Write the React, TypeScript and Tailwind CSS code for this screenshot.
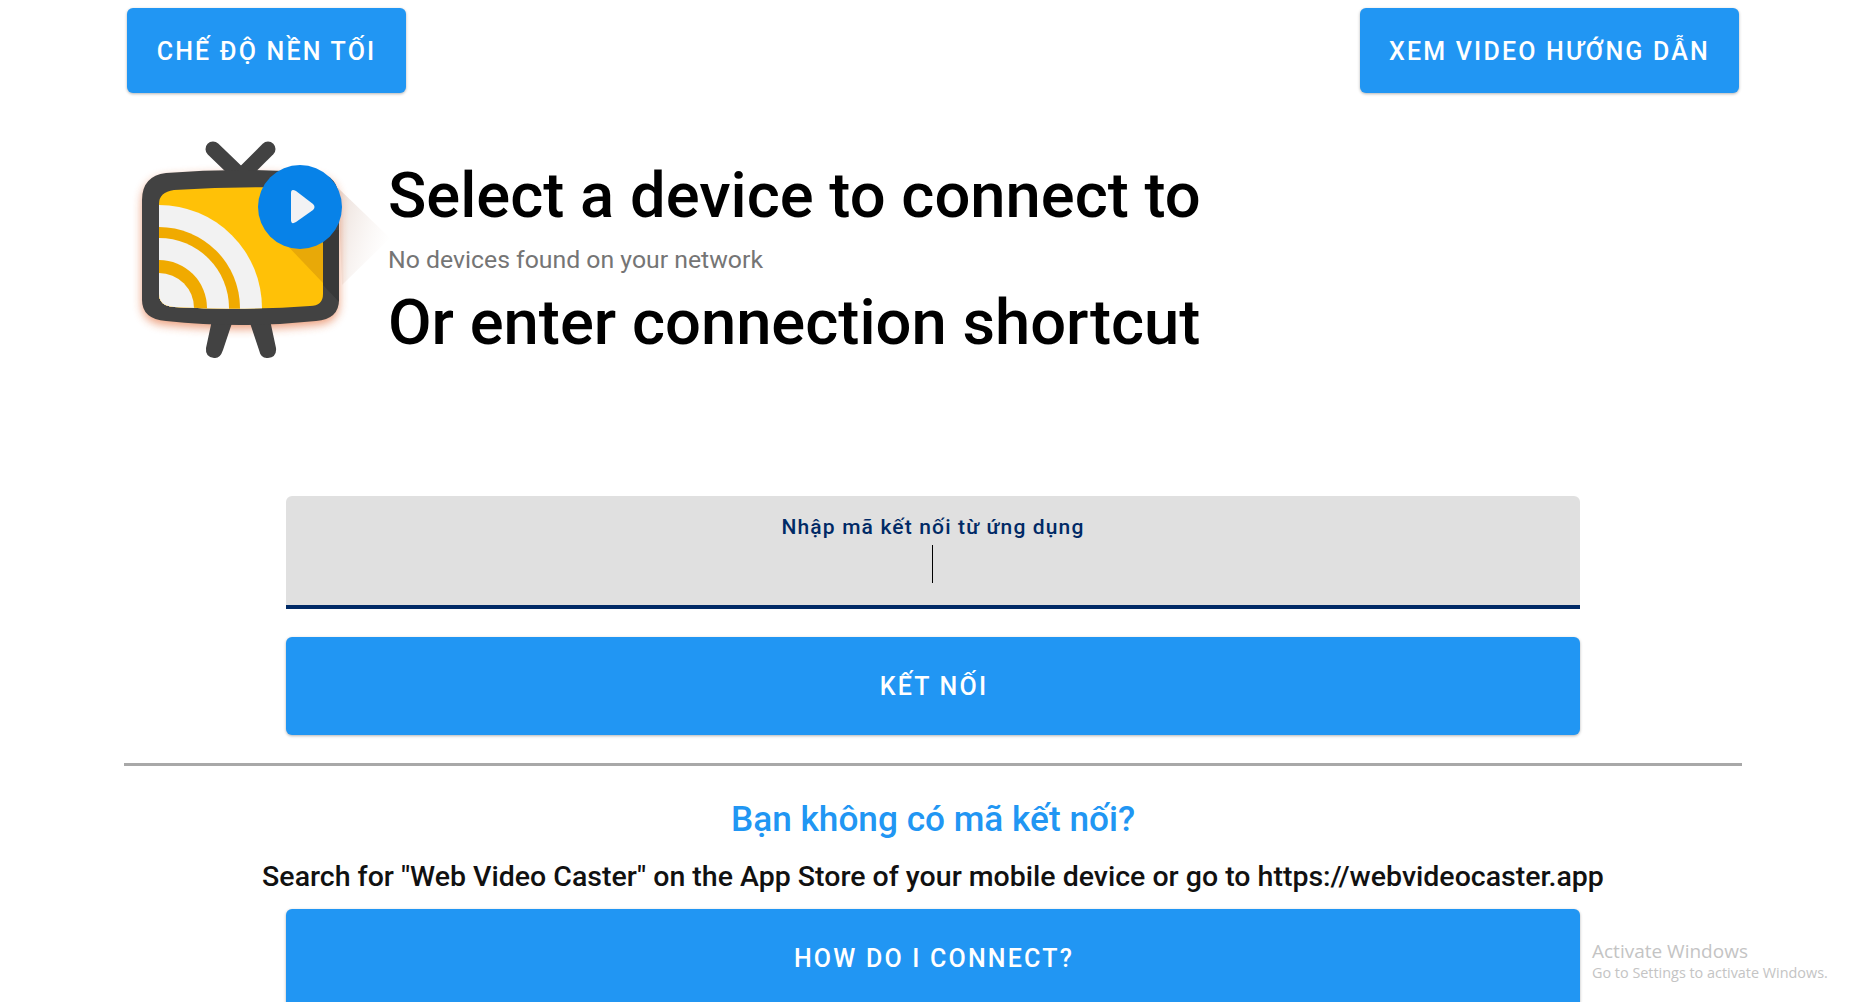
function TvLogo() {
  const body = "M32 80 Q32 56 56 53 Q130 47 206 53 Q229 55 229 80 L229 180 Q229 199 206 201 Q130 209 56 201 Q32 199 32 180Z"
  return (
    <svg width="300" height="260" viewBox="0 0 300 260" className="shrink-0">
      <defs>
        <clipPath id="screen">
          <path d="M64 70 Q130 66 200 68 Q213 69 213 82 L213 174 Q213 186 200 186 Q130 191 64 187 Q49 186 49 174 L49 84 Q49 72 64 70Z" />
        </clipPath>
        <clipPath id="bodyclip">
          <path d={body} />
        </clipPath>
        <linearGradient id="fade" x1="0" y1="0" x2="1" y2="0.55">
          <stop offset="0" stopColor="#c9a898" stopOpacity="0.4" />
          <stop offset="1" stopColor="#e8d8d0" stopOpacity="0" />
        </linearGradient>
        <filter id="glow" x="-20%" y="-20%" width="140%" height="140%">
          <feGaussianBlur stdDeviation="5" />
        </filter>
      </defs>
      <path d="M228 68 L280 118 L232 165Z" fill="url(#fade)" />
      <path d={body} transform="translate(0 4)" fill="#e0622a" opacity="0.6" filter="url(#glow)" />
      <g stroke="#424242" strokeWidth="15" strokeLinecap="round" fill="none">
        <path d="M103 29 L131 56" />
        <path d="M158 29 L131 56" />
      </g>
      <path d="M102 200 L123 200 L113 230 Q110 239 104 238 Q95 237 96 228Z" fill="#424242" />
      <path d="M139 200 L160 200 L166 228 Q167 237 158 238 Q151 239 149 230Z" fill="#424242" />
      <path d={body} fill="#424242" />
      <g clipPath="url(#bodyclip)">
        <path d="M213 110 L232 110 L232 185 L213 165Z" fill="#383838" />
      </g>
      <g clipPath="url(#screen)">
        <rect x="49" y="60" width="170" height="135" fill="#ffc107" />
        <path d="M172 120 L213 163 L213 100Z" fill="#e8a908" />
        <circle cx="49" cy="188" r="103" fill="#f2f2f2" />
        <circle cx="49" cy="188" r="81" fill="#f0aa00" />
        <circle cx="49" cy="188" r="70" fill="#f2f2f2" />
        <circle cx="49" cy="188" r="48" fill="#f0aa00" />
        <circle cx="49" cy="188" r="35" fill="#f2f2f2" />
      </g>
      <circle cx="190" cy="87" r="42" fill="#0782e8" />
      <path d="M181 73 Q181 68 186 71 L203 84 Q206 87 203 90 L186 102 Q181 105 181 100Z" fill="#f2f2f4" />
    </svg>
  )
}

export default function App() {
  return (
    <div className="w-full h-[1002px] overflow-hidden relative bg-white font-['Roboto',sans-serif]">
      <div className="pl-[124px] pr-[123px]">
        <div className="flex justify-between pt-2 px-[3px]">
          <button className="h-[85px] w-[279px] pt-[2px] rounded-md bg-[#2196f3] text-white text-[25px] font-medium tracking-[2.2px] shadow-[0_1px_3px_rgba(0,0,0,0.3)]">
            CHẾ ĐỘ NỀN TỐI
          </button>
          <button className="h-[85px] w-[379px] pt-[2px] rounded-md bg-[#2196f3] text-white text-[25px] font-medium tracking-[2.2px] shadow-[0_1px_3px_rgba(0,0,0,0.3)]">
            XEM VIDEO HƯỚNG DẪN
          </button>
        </div>

        <div className="flex mt-[27px]">
          <div className="w-[265px] h-[260px] -ml-[14px] mr-[13px]">
            <TvLogo />
          </div>
          <div className="pt-[40px]">
            <h1 className="text-[63.3px] leading-[70px] font-medium text-black">Select a device to connect to</h1>
            <p className="text-[24.8px] leading-[28px] mt-[16px] text-[#757575]">No devices found on your network</p>
            <h1 className="text-[63.3px] leading-[70px] mt-[13px] font-medium text-black">Or enter connection shortcut</h1>
          </div>
        </div>

        <div className="mx-[162px] mt-[116px]">
          <div className="h-[113px] bg-[#e0e0e0] rounded-t-md border-b-4 border-[#002a66] pt-[19px] text-center">
            <div className="text-[21px] leading-6 font-medium tracking-[1.15px] text-[#002a66]">Nhập mã kết nối từ ứng dụng</div>
            <div className="w-px h-[38px] bg-black ml-[calc(50%-1px)] mt-[6px]" />
          </div>
          <button className="mt-[28px] w-full h-[98px] pt-[2px] pl-[2px] rounded-md bg-[#2196f3] text-white text-[25px] font-medium tracking-[2.2px] shadow-[0_1px_3px_rgba(0,0,0,0.3)]">
            KẾT NỐI
          </button>
        </div>

        <hr className="mt-[28px] border-0 h-[3px] bg-[#a8a8a8]" />

        <h2 className="mt-[31px] text-center text-[35.2px] leading-[44px] font-medium text-[#2196f3]">Bạn không có mã kết nối?</h2>
        <p className="mt-[19px] text-center text-[28.5px] leading-[34px] font-medium text-[#111]">
          Search for "Web Video Caster" on the App Store of your mobile device or go to https://webvideocaster.app
        </p>

        <div className="mx-[162px] mt-[15px]">
          <button className="w-full h-[98px] pt-[2px] pl-[2px] rounded-md bg-[#2196f3] text-white text-[25px] font-medium tracking-[2.2px] shadow-[0_1px_3px_rgba(0,0,0,0.3)]">
            HOW DO I CONNECT?
          </button>
        </div>
      </div>

      <div className="absolute left-[1592px] top-[939px] text-[#c4c4c4] font-['Open_Sans',sans-serif]">
        <div className="text-[19px] leading-6">Activate Windows</div>
        <div className="text-[14.4px] leading-5">Go to Settings to activate Windows.</div>
      </div>
    </div>
  )
}
